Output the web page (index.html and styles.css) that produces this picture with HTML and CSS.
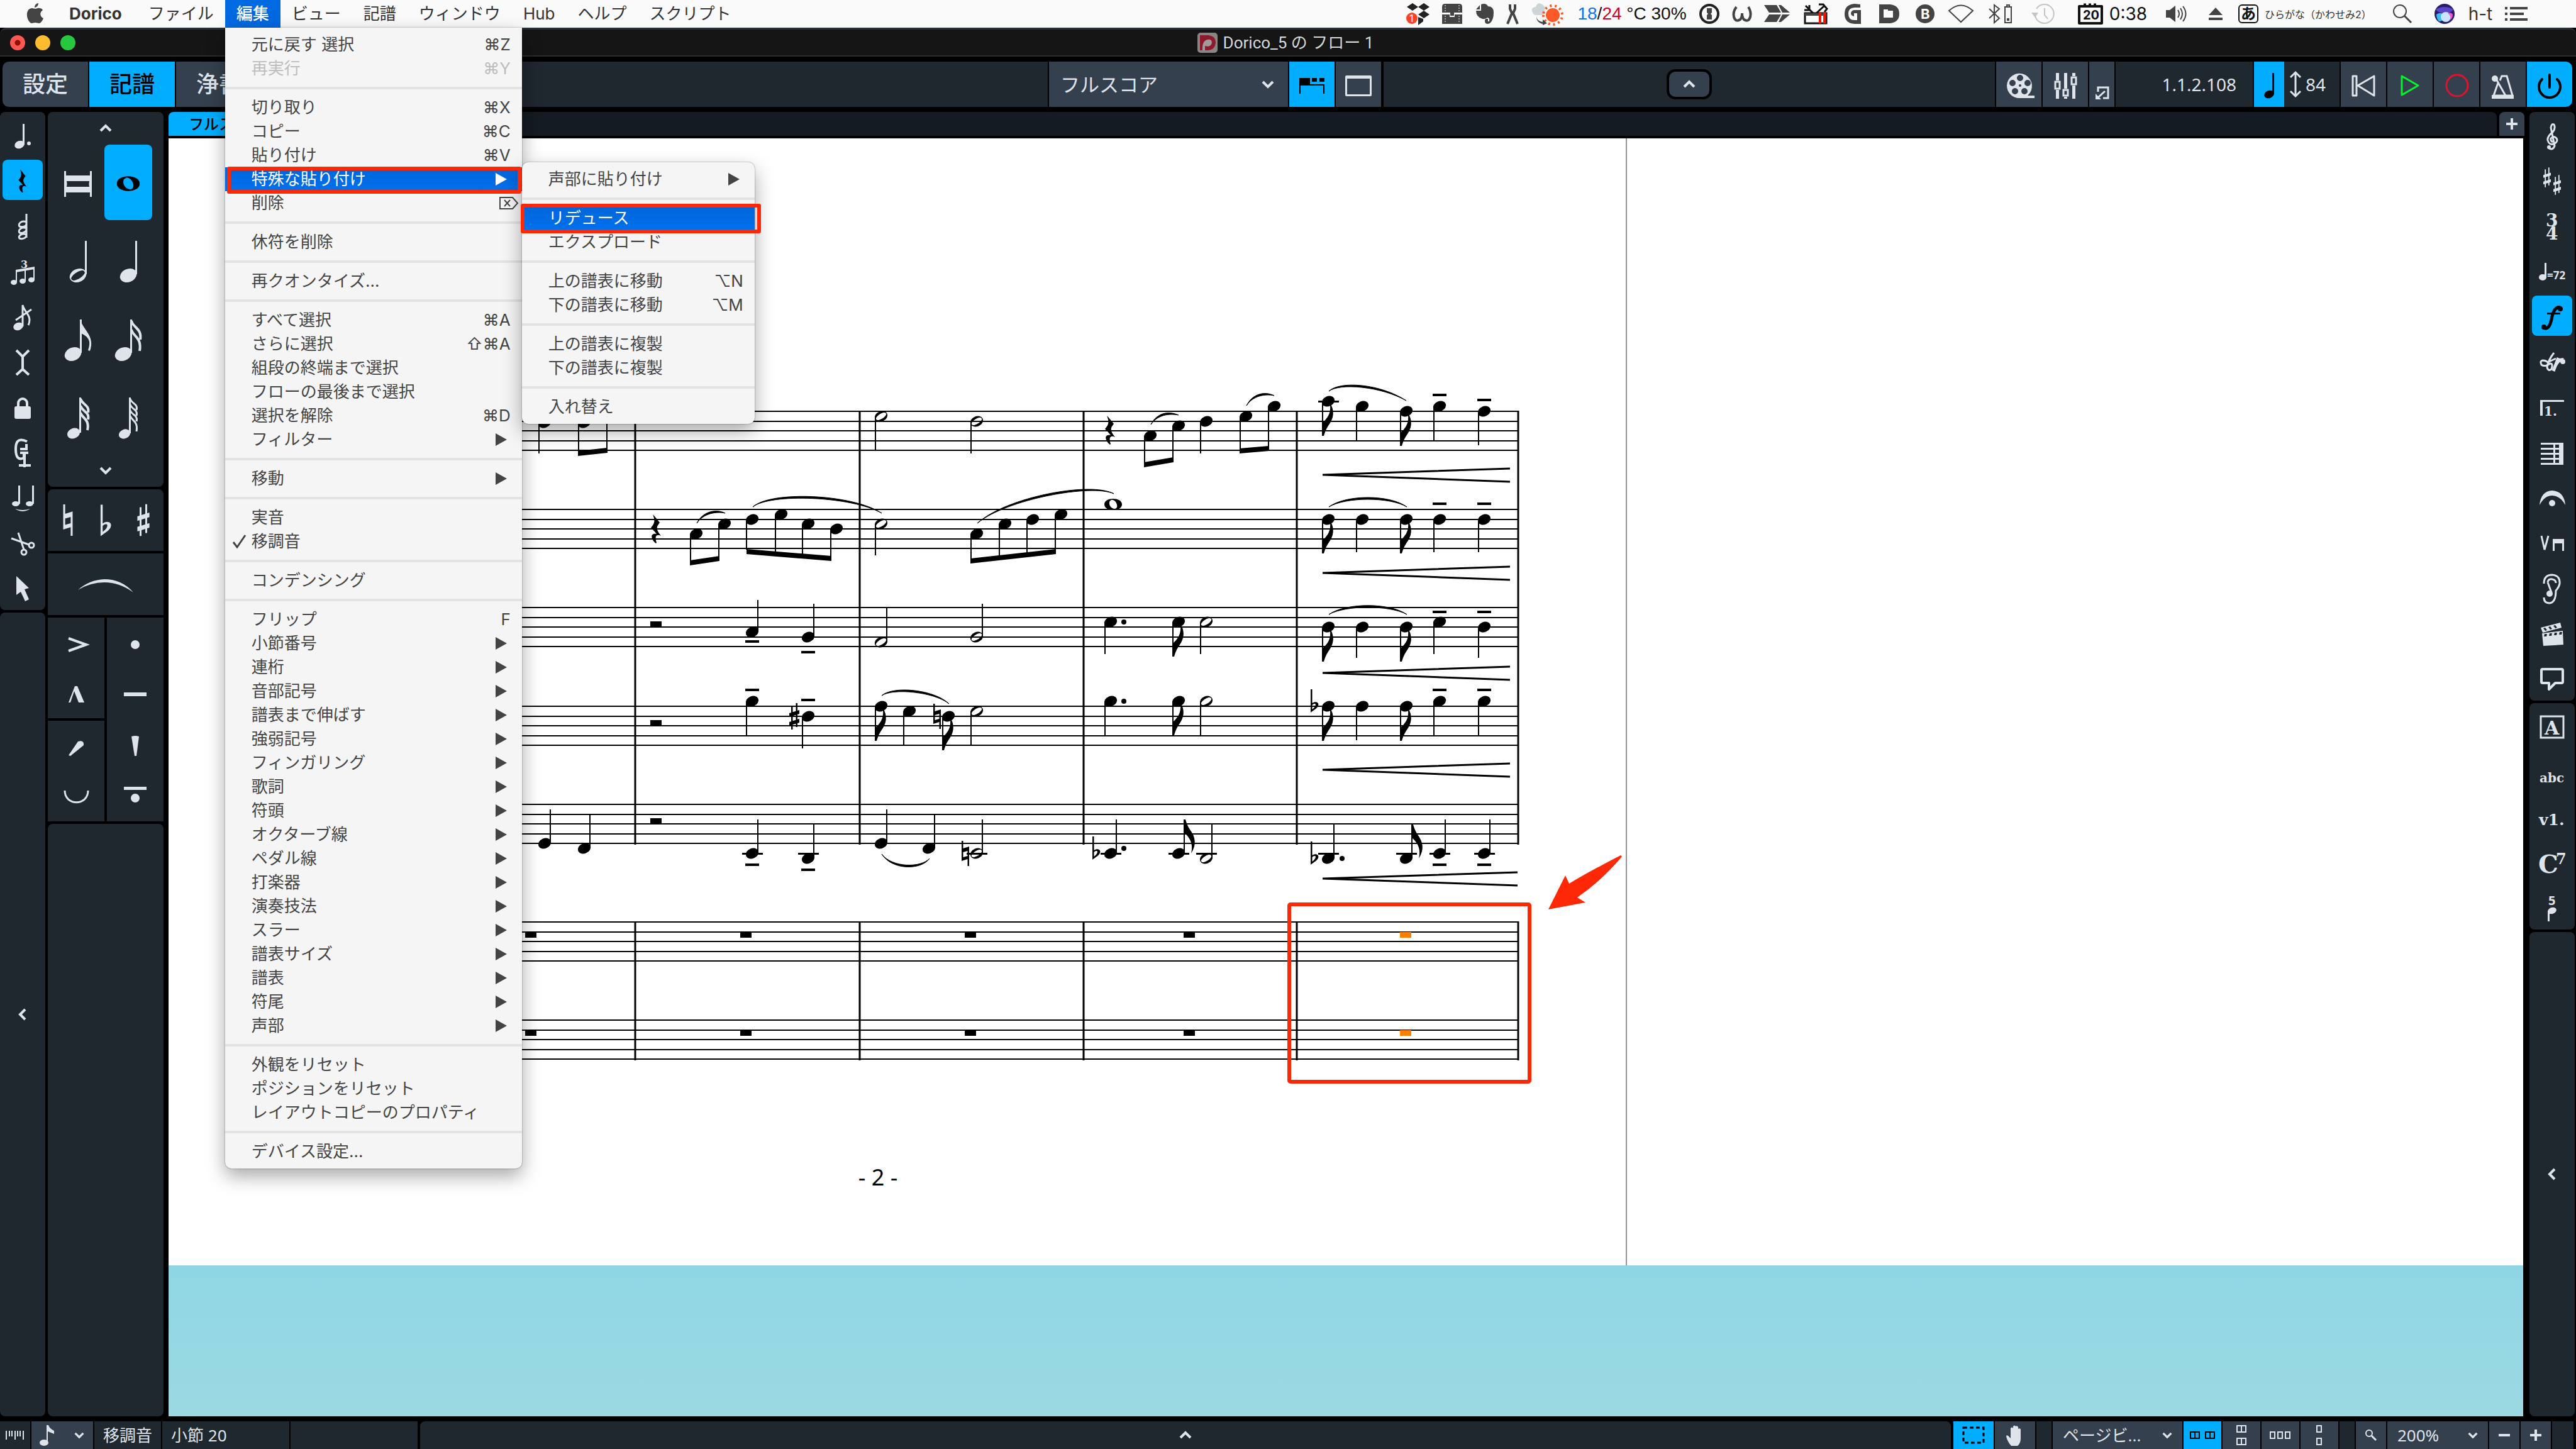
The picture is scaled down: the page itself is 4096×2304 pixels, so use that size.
FILE: index.html
```html
<!DOCTYPE html>
<html lang="ja">
<head>
  <meta charset="UTF-8">
  <meta name="viewport" content="width=device-width, initial-scale=1.0">
  <title>Dorico_5 の フロー 1</title>
  <link rel="stylesheet" href="styles.css">
</head>
<body>
  <!-- shared music shapes -->
  <svg class="defs" aria-hidden="true">
    <defs>
      <ellipse id="head" rx="10.5" ry="8" transform="rotate(-24)"/>
      <path id="half" fill-rule="evenodd" transform="rotate(-24)" d="M-10.5 0a10.5 8 0 1 0 21 0a10.5 8 0 1 0 -21 0zM-9 1.500a9.200 3.600 -8 1 1 18 -3a9.200 3.600 -8 1 1 -18 3z"/>
      <path id="whole" fill-rule="evenodd" d="M-14 0C-14 -12 14 -12 14 0C14 12 -14 12 -14 0zM-6 -3C-7 4 1 9 5 6C9 2 3 -9 -3 -7C-5 -6 -6 -5 -6 -3z"/>
      <path id="flag" d="M-1 0V-20C4 -25 16 -34 11 -54C20 -40 18 -28 9 -16C5 -10 3 -4 2 0z"/>
      <path id="rest" d="M-4 -23C-1 -20 3 -15 7 -10C1 -3 1 1 9 11C3 8 -2 10 2 22L1 23C-6 18 -10 6 2 8C-1 4 -4 1 -7 -2C-1 -9 0 -13 -4 -23z"/>
      <path id="sharp" d="M-5 -17h2.500v38h-2.500zM2.500 -21H5v38H2.500zM-8 -5L8 -10v6L-8 1zM-8 9L8 4v6L-8 15z"/>
      <path id="natural" fill-rule="evenodd" d="M-6 -20h2.500v12L6 -11V20H3.500V9L-6 12zM-3.500 -2V6L3.500 4V-4z"/>
      <path id="flat" fill-rule="evenodd" d="M-6 -27h2.500V-5C2 -9 8 -6 6 -1C5 3 -1 6 -6 10zM-3.500 -2V5C0 2 2 0 2 -3C1 -5 -2 -4 -3.500 -2z"/>
      <path id="chev" fill="none" stroke-width="4" d="M-8 4L0 -4L8 4"/>
      <path id="tri" d="M0 0L18 10L0 20z"/>
    </defs>
  </svg>

  <header class="menubar">
    <nav class="menus">
      <button class="apple" aria-label="Apple"><svg width="28" height="36" viewBox="0 0 28 36"><path d="M19 1c0 4-3 7-6 7c0-4 3-7 6-7zM14 10c2 0 4-2 7-1c2 0 4 1 5 3c-6 4-4 11 1 13c-1 3-4 8-7 8c-2 0-3-1-6-1s-4 1-6 1C4 32 0 24 1 17c1-6 5-8 8-8c2 0 4 1 5 1z"/></svg></button>
      <button class="app-name">Dorico</button>
      <button>ファイル</button>
      <div class="menu-root">
        <button class="open">編集</button>
        <div class="menu edit-menu" role="menu">
          <button>元に戻す 選択<kbd>⌘Z</kbd></button>
          <button disabled>再実行<kbd>⌘Y</kbd></button>
          <hr>
          <button>切り取り<kbd>⌘X</kbd></button>
          <button>コピー<kbd>⌘C</kbd></button>
          <button>貼り付け<kbd>⌘V</kbd></button>
          <div class="sub-root">
            <button class="active">特殊な貼り付け<svg class="tri"><use href="#tri"/></svg></button>
            <span class="mark mark-paste"></span>
            <div class="menu sub-menu" role="menu">
              <button>声部に貼り付け<svg class="tri"><use href="#tri"/></svg></button>
              <hr>
              <div class="sub-root">
                <button class="active">リデュース</button>
                <span class="mark mark-reduce"></span>
              </div>
              <button>エクスプロード</button>
              <hr>
              <button>上の譜表に移動<kbd>⌥N</kbd></button>
              <button>下の譜表に移動<kbd>⌥M</kbd></button>
              <hr>
              <button>上の譜表に複製</button>
              <button>下の譜表に複製</button>
              <hr>
              <button>入れ替え</button>
            </div>
          </div>
          <button class="wide">削除<svg width="30" height="22" viewBox="0 0 30 22"><path fill="none" stroke="#444" stroke-width="2" d="M1 2H21L29 11L21 20H1zM8 6L17 16M17 6L8 16"/></svg></button>
          <hr>
          <button>休符を削除</button>
          <hr>
          <button>再クオンタイズ...</button>
          <hr>
          <button>すべて選択<kbd>⌘A</kbd></button>
          <button>さらに選択<kbd>⇧⌘A</kbd></button>
          <button>組段の終端まで選択</button>
          <button>フローの最後まで選択</button>
          <button>選択を解除<kbd>⌘D</kbd></button>
          <button>フィルター<svg class="tri"><use href="#tri"/></svg></button>
          <hr>
          <button>移動<svg class="tri"><use href="#tri"/></svg></button>
          <hr>
          <button>実音</button>
          <button class="checked"><svg width="24" height="24" viewBox="0 0 24 24"><path fill="none" stroke="#444" stroke-width="3" d="M2 13L8 21L21 2"/></svg>移調音</button>
          <hr>
          <button>コンデンシング</button>
          <hr>
          <button>フリップ<kbd>F</kbd></button>
          <button>小節番号<svg class="tri"><use href="#tri"/></svg></button>
          <button>連桁<svg class="tri"><use href="#tri"/></svg></button>
          <button>音部記号<svg class="tri"><use href="#tri"/></svg></button>
          <button>譜表まで伸ばす<svg class="tri"><use href="#tri"/></svg></button>
          <button>強弱記号<svg class="tri"><use href="#tri"/></svg></button>
          <button>フィンガリング<svg class="tri"><use href="#tri"/></svg></button>
          <button>歌詞<svg class="tri"><use href="#tri"/></svg></button>
          <button>符頭<svg class="tri"><use href="#tri"/></svg></button>
          <button>オクターブ線<svg class="tri"><use href="#tri"/></svg></button>
          <button>ペダル線<svg class="tri"><use href="#tri"/></svg></button>
          <button>打楽器<svg class="tri"><use href="#tri"/></svg></button>
          <button>演奏技法<svg class="tri"><use href="#tri"/></svg></button>
          <button>スラー<svg class="tri"><use href="#tri"/></svg></button>
          <button>譜表サイズ<svg class="tri"><use href="#tri"/></svg></button>
          <button>譜表<svg class="tri"><use href="#tri"/></svg></button>
          <button>符尾<svg class="tri"><use href="#tri"/></svg></button>
          <button>声部<svg class="tri"><use href="#tri"/></svg></button>
          <hr>
          <button>外観をリセット</button>
          <button>ポジションをリセット</button>
          <button>レイアウトコピーのプロパティ</button>
          <hr>
          <button>デバイス設定...</button>
        </div>
      </div>
      <button>ビュー</button>
      <button>記譜</button>
      <button>ウィンドウ</button>
      <button>Hub</button>
      <button>ヘルプ</button>
      <button>スクリプト</button>
    </nav>
    <div class="tray">
      <svg width="40" height="36" viewBox="0 0 40 36"><path fill="#222" d="M11 1l9 6-9 6-9-6zM29 1l9 6-9 6-9-6zM29 13l9 6-9 6-9-6zM20 23l8 3v4l-8 6z"/><circle cx="10" cy="25" r="9" fill="#fb4126"/><text x="6" y="31" font-size="16" fill="#fff">1</text></svg>
      <svg width="34" height="34" viewBox="0 0 34 34"><path d="M1 6q0-5 5-5h22q5 0 5 5v9H1zM1 18h12v4h8v-4h12v15H1z"/><path d="M14 14h6v6h-6z"/><path fill="none" stroke="#fff" stroke-dasharray="2 2" d="M6 3v11M28 3v11M6 20v11M28 20v11"/></svg>
      <svg width="30" height="34" viewBox="0 0 30 34"><path d="M9 2q8-3 11 3q9 0 9 10q0 12-6 17q-8 3-8-4q0-4 5-3v4h2q1-6-3-6q-4 3-8 2Q1 22 1 12h8zM7 3v7H1z"/></svg>
      <svg width="22" height="34" viewBox="0 0 22 34"><path fill="none" stroke="#444" stroke-width="4" d="M7 2v7l3 7L3 33M15 2v7l-3 7l7 17"/></svg>
      <svg width="52" height="36" viewBox="0 0 52 36"><path fill="#cfd4d6" d="M2 16q-4-8 5-9q3-9 10-4q6 3 4 8q3 10-6 9H8q-5 0-6-4z"/><path fill="none" stroke="#f35b2a" stroke-width="4" stroke-dasharray="3 5" d="M19 20a15 15 0 1 0 30 0a15 15 0 1 0 -30 0"/><circle cx="34" cy="20" r="11" fill="#fb5a28"/><path d="M8 22q1 8 10 9v-4l7 6-7 3v-2q-10-2-10-12z"/></svg>
      <span class="weather"><b class="blue">18</b>/<b class="red">24</b> °C 30%</span>
      <svg width="34" height="34" viewBox="0 0 34 34"><circle cx="17" cy="17" r="14" fill="none" stroke="#222" stroke-width="4"/><path d="M13 8h8v7l-2 2l2 2v7h-8v-7l2-2l-2-2z"/></svg>
      <svg width="32" height="28" viewBox="0 0 32 28"><path fill="none" stroke="#444" stroke-width="4" d="M7 3Q1 11 3 19Q6 28 13 23Q16 20 16 13Q16 20 19 23Q26 28 29 19Q31 11 26 3"/></svg>
      <svg width="44" height="28" viewBox="0 0 44 28"><path d="M1 0h20l7 12H9zM24 0h4l14 12H30zM9 15h19l-7 12H1zM30 15h12L28 27h-4z"/></svg>
      <svg width="40" height="34" viewBox="0 0 40 34"><path fill="#fff" stroke="#111" stroke-width="3" d="M3 16h34v16H3z"/><path fill="none" stroke="#111" stroke-width="3" d="M4 4l14 14M10 3v8H2M34 4L20 17M25 2h7l6 7-4 5"/><path d="M3 16h34v4H3z"/><path fill="none" stroke="#f21800" stroke-width="4" d="M27 14v18M34 14v18"/></svg>
      <svg width="28" height="34" viewBox="0 0 28 34"><path d="M26 2v5H17q-10 0-10 10t10 10h4V16h-5v5q-5-1-5-5q1-5 6-5h10v22H17Q1 32 1 17Q1 2 17 1z"/></svg>
      <svg width="34" height="32" viewBox="0 0 34 32"><path fill-rule="evenodd" d="M1 1h18q14 2 14 15T19 31H1zM8 9v13h15V11h-8v-2z"/></svg>
      <svg width="32" height="32" viewBox="0 0 32 32"><circle cx="16" cy="16" r="15"/><text x="9" y="24" font-size="22" font-weight="bold" fill="#fff">B</text></svg>
      <svg width="42" height="30" viewBox="0 0 42 30"><path fill="none" stroke="#444" stroke-width="2" d="M2 10Q21-7 40 10L21 28z"/></svg>
      <svg width="40" height="32" viewBox="0 0 40 32"><path fill="none" stroke="#444" stroke-width="2" d="M2 8l16 15-8 7V2l8 6L2 23M27 5h10v25H27zM30 5V2h4v3"/><path d="M30 23h4v4h-4z"/></svg>
      <svg width="40" height="34" viewBox="0 0 40 34"><path fill="none" stroke="#c4c4c4" stroke-width="2" d="M7 20a15 15 0 1 0 2-11M22 8v11l5 6"/><path fill="#c4c4c4" d="M1 15h11l-5 8z"/></svg>
      <span class="clock"><svg width="40" height="34" viewBox="0 0 40 34"><path fill="none" stroke="#111" stroke-width="4" stroke-linejoin="round" d="M2 5h36v27H2z"/><path stroke="#111" stroke-width="3" stroke-dasharray="4 4" d="M9 2h24"/><text x="8" y="26" font-size="20" font-weight="bold" fill="#111">20</text></svg>0:38</span>
      <svg width="36" height="30" viewBox="0 0 36 30"><path d="M1 9h6l9-7v26l-9-7H1z"/><path fill="none" stroke="#444" stroke-width="2" d="M20 9q4 6 0 12M24 6q6 9 0 18M28 3q9 12 0 24"/></svg>
      <svg width="24" height="22" viewBox="0 0 24 22"><path d="M12 1l11 12H1zM1 17h22v4H1z"/></svg>
      <span class="ime"><i>あ</i>ひらがな（かわせみ2）</span>
      <svg width="32" height="32" viewBox="0 0 32 32"><circle cx="12" cy="12" r="10" fill="none" stroke="#444" stroke-width="2"/><path stroke="#444" stroke-width="3" d="M19 19l11 11"/></svg>
      <svg width="34" height="34" viewBox="0 0 34 34"><circle cx="17" cy="17" r="16" fill="#2b1c6b"/><path fill="#5946c8" d="M3 10q14-8 28 0q-4 6-14 6T3 10z"/><path fill="#39c0e8" d="M4 18q9-6 13 4q-4 8-9 7q-4-5-4-11z"/><circle cx="19" cy="22" r="8" fill="#c9e4ff"/><path fill="#ec5ac8" d="M22 16q6-2 8 2q0 6-4 9q2-7-4-11z"/></svg>
      <span class="user">h-t</span>
      <svg width="36" height="22" viewBox="0 0 36 22"><path d="M0 0h4v4H0zM8 0h28v4H8zM0 9h4v4H0zM8 9h22v4H8zM0 18h4v4H0zM8 18h28v4H8z"/></svg>
    </div>
  </header>

  <div class="titlebar">
    <div class="lights"><button class="close" aria-label="閉じる"></button><button class="min" aria-label="しまう"></button><button class="zoom" aria-label="拡大"></button></div>
    <h1><svg width="32" height="32" viewBox="0 0 32 32"><rect width="32" height="32" rx="5" fill="#8a8585"/><path fill="#8c1a2c" d="M4 4h13q12 1 12 12q-1 11-12 12H4z"/><path fill="#a09a9a" d="M8 28q-1-15 8-17q7-1 7 5q-2 8-11 5v7z"/></svg>Dorico_5 の フロー 1</h1>
  </div>

  <div class="toolbar">
    <div class="modes">
      <button>設定</button>
      <button class="on">記譜</button>
      <button>浄書</button>
    </div>
    <div class="fill"></div>
    <div class="group">
      <div class="select layout-select">
        <select aria-label="レイアウト"><option>フルスコア</option></select>
        <svg width="20" height="12" viewBox="-10 -6 20 12"><use href="#chev" transform="scale(1 -1)"/></svg>
      </div>
      <button class="tool on" aria-label="タブ"><svg viewBox="0 0 72 72"><path d="M16 26h17v10H16zM36 26h8v6h-8zM48 26h8v6h-8zM16 36h40v15h-2V38H18v13h-2z"/></svg></button>
      <button class="tool" aria-label="ウィンドウ"><svg viewBox="0 0 72 72"><path fill-rule="evenodd" d="M15 24q0-2 2-2h38q2 0 2 2v29q0 2-2 2H17q-2 0-2-2zM18 27v25h36V27z"/></svg></button>
    </div>
    <div class="fill toggle"><button aria-label="ツールバー"><svg width="20" height="12" viewBox="-10 -6 20 12"><use href="#chev"/></svg></button></div>
    <div class="group">
      <button class="tool" aria-label="ビデオ"><svg viewBox="0 0 72 72"><path fill-rule="evenodd" d="M17 38a20 20 0 1 1 33 16h11v4H37a20 20 0 0 1-20-20zM33 26a5 5 0 1 0 10 0a5 5 0 1 0-10 0M21 34a5 5 0 1 0 10 0a5 5 0 1 0-10 0M45 34a5 5 0 1 0 10 0a5 5 0 1 0-10 0M25 47a5 5 0 1 0 10 0a5 5 0 1 0-10 0M40 47a5 5 0 1 0 10 0a5 5 0 1 0-10 0M36 38a2 2 0 1 0 4 0a2 2 0 1 0-4 0"/></svg></button>
      <button class="tool" aria-label="ミキサー"><svg viewBox="0 0 72 72"><path fill="none" stroke="#dfe3ea" stroke-width="3" d="M20 32h7v11h-7zM33 45h7v9h-7zM46 25h7v11h-7z"/><path d="M21 18h5v12h-5zM21 45h5v14h-5zM34 18h5v25h-5zM34 56h5v3h-5zM47 18h5v5h-5zM47 38h5v21h-5z"/></svg></button>
      <button class="tool narrow" aria-label="別ウィンドウ"><svg viewBox="0 0 40 72"><path fill="none" stroke="#dfe3ea" stroke-width="3" d="M14 48V41h16v17h-8M25 47L14 57"/><path d="M10 51v9h9z"/></svg></button>
      <output class="position">1.1.2.108</output>
      <button class="tool beat on" aria-label="拍"><svg viewBox="0 0 48 72"><ellipse cx="24" cy="52" rx="8" ry="6" transform="rotate(-20 24 52)"/><path d="M29 18h3v34h-3z"/></svg></button>
      <div class="tempo"><svg width="20" height="44" viewBox="0 0 20 44"><path fill="none" stroke="#dfe3ea" stroke-width="3" d="M10 3v38M2 11l8-8l8 8M2 33l8 8l8-8"/></svg>84</div>
      <button class="tool" aria-label="先頭へ"><svg viewBox="0 0 72 72"><path fill="none" stroke="#dfe3ea" stroke-width="3" stroke-linejoin="round" d="M19 23h6v31h-6zM53 23v31L27 38z"/></svg></button>
      <button class="tool" aria-label="再生"><svg viewBox="0 0 72 72"><path fill="none" stroke="#06f22c" stroke-width="3" stroke-linejoin="round" d="M23 23v30l26-15z"/></svg></button>
      <button class="tool" aria-label="録音"><svg viewBox="0 0 72 72"><circle cx="37" cy="38" r="17" fill="none" stroke="#e0122e" stroke-width="3"/></svg></button>
      <button class="tool" aria-label="クリック"><svg viewBox="0 0 72 72"><path fill="none" stroke="#dfe3ea" stroke-width="3" d="M28 34L21 54H51L42 23H34L31 30M24 26L40 54"/><path d="M18 53h35v6H18z"/><circle cx="23" cy="27" r="5"/></svg></button>
      <button class="tool on last" aria-label="オーディオ"><svg viewBox="0 0 72 72"><path fill="none" stroke="#000" stroke-width="4" stroke-linecap="round" d="M36 21v20M24 28a17 17 0 1 0 24 0"/></svg></button>
    </div>
  </div>

  <div class="workspace">
    <aside class="left">
      <div class="strip">
        <div class="panel icons">
          <button aria-label="付点"><svg viewBox="0 0 64 64"><ellipse cx="27" cy="48" rx="8" ry="6" transform="rotate(-20 27 48)"/><path d="M32 15h3v33h-3z"/><circle cx="42" cy="46" r="3"/></svg></button>
          <button class="on" aria-label="休符"><svg viewBox="0 0 64 64"><use href="#rest" transform="translate(31 34) scale(.8)"/></svg></button>
          <button aria-label="和音"><svg viewBox="0 0 64 64"><path fill="none" stroke="#dfe3ea" stroke-width="3" d="M38 14V52M38 27C30 24 24 30 27 34C32 36 38 34 38 30M38 37C30 34 24 40 27 44C32 46 38 42 38 39M38 47C30 44 24 50 27 53C32 55 38 52 38 48"/></svg></button>
          <button aria-label="連符"><svg viewBox="0 0 64 64"><text class="slab" x="29" y="28" font-size="16">3</text><path fill="none" stroke="#dfe3ea" stroke-width="2" d="M22 51V33L50 28V47M36 49V31"/><path d="M21 31l30-5v4l-30 5z"/><ellipse cx="18" cy="51" rx="5" ry="4"/><ellipse cx="32" cy="49" rx="5" ry="4"/><ellipse cx="46" cy="47" rx="5" ry="4"/></svg></button>
          <button aria-label="装飾音符"><svg viewBox="0 0 64 64"><ellipse cx="25" cy="49" rx="8" ry="6" transform="rotate(-20 25 49)"/><path fill="none" stroke="#dfe3ea" stroke-width="3" d="M32 49V15C34 26 48 32 41 47M21 39L46 22"/></svg></button>
          <button aria-label="キャレット"><svg viewBox="0 0 64 64"><path fill="none" stroke="#dfe3ea" stroke-width="4" d="M22 15L32 25L42 15M32 24V46M22 54L32 45L42 54"/></svg></button>
          <button aria-label="ロック"><svg viewBox="0 0 64 64"><rect x="19" y="32" width="26" height="20" rx="3"/><path fill="none" stroke="#dfe3ea" stroke-width="4" d="M25 33V27a7 7 0 0 1 14 0v6"/></svg></button>
          <button aria-label="声部"><svg viewBox="0 0 64 64"><path fill="none" stroke="#dfe3ea" stroke-width="4" d="M38 20V28H28M39 16C26 10 21 15 21 28C21 42 26 46 34 42V34H28M28 34H41M35 34V57M26 54H45"/></svg></button>
          <button aria-label="タイ"><svg viewBox="0 0 64 64"><ellipse cx="21" cy="43" rx="6" ry="4"/><ellipse cx="43" cy="43" rx="6" ry="4"/><path d="M25 14h3v29h-3zM47 14h3v29h-3zM20 51Q32 55 44 51Q32 59 20 51z"/></svg></button>
          <button aria-label="はさみ"><svg viewBox="0 0 64 64"><path fill="none" stroke="#dfe3ea" stroke-width="3" d="M14 26L42 36M25 17L34 44"/><circle cx="34" cy="48" r="4" fill="none" stroke="#dfe3ea" stroke-width="3"/><circle cx="46" cy="37" r="4" fill="none" stroke="#dfe3ea" stroke-width="3"/></svg></button>
          <button aria-label="選択"><svg viewBox="0 0 64 64"><path d="M22 14L42 33L35 35L42 51L36 54L29 39L22 44z"/></svg></button>
        </div>
        <div class="panel rest"><button class="side" aria-label="左パネル"><svg width="12" height="20" viewBox="-6 -10 12 20"><use href="#chev" transform="rotate(-90)"/></svg></button></div>
      </div>
      <div class="notes">
        <div class="panel durations">
          <button class="more" aria-label="上へ"><svg width="24" height="12" viewBox="-12 -6 24 12"><use href="#chev"/></svg></button>
          <div class="cells">
            <button aria-label="倍全音符"><svg viewBox="0 0 76 120"><path d="M16 42h3v41h-3zM57 42h3v41h-3zM19 49h38v9H19zM19 67h38v9H19z"/><path d="M19 55q3 8 0 14zM57 55q-3 8 0 14z"/></svg></button>
            <button class="on" aria-label="全音符"><svg viewBox="0 0 76 120"><use href="#whole" transform="translate(38 62) scale(1.300)"/></svg></button>
            <button aria-label="2分音符"><svg viewBox="0 0 76 120"><use href="#half" transform="translate(38 84) scale(1.300)"/><path d="M49 29h3v53h-3z"/></svg></button>
            <button aria-label="4分音符"><svg viewBox="0 0 76 120"><use href="#head" transform="translate(38 84) scale(1.300)"/><path d="M49 29h3v53h-3z"/></svg></button>
            <button aria-label="8分音符"><svg viewBox="0 0 76 120"><use href="#head" transform="translate(30 85) scale(1.300)"/><path d="M41 30h3v53h-3zM42 30C45 46 66 56 57 80L54 79C61 60 50 56 43 52z"/></svg></button>
            <button aria-label="16分音符"><svg viewBox="0 0 76 120"><use href="#head" transform="translate(30 85) scale(1.300)"/><path d="M41 30h3v53h-3z"/><path fill="none" stroke="#dfe3ea" stroke-width="4" d="M43 32C45 43 60 44 57 62M43 46C45 57 60 58 56 80"/></svg></button>
            <button aria-label="32分音符"><svg viewBox="0 0 76 120"><use href="#head" x="31" y="87"/><path d="M40 30h3v56h-3z"/><path fill="none" stroke="#dfe3ea" stroke-width="4" d="M42 32C44 41 57 42 54 54M42 43C44 52 57 53 54 65M42 54C44 63 57 64 53 82"/></svg></button>
            <button aria-label="64分音符"><svg viewBox="0 0 76 120"><use href="#head" transform="translate(32 88) scale(.9)"/><path d="M39 30h3v57h-3z"/><path fill="none" stroke="#dfe3ea" stroke-width="3" d="M41 32C43 40 54 40 51 50M41 41C43 49 54 49 51 59M41 50C43 58 54 58 51 68M41 59C43 67 54 67 51 84"/></svg></button>
          </div>
          <button class="more" aria-label="下へ"><svg width="24" height="12" viewBox="-12 -6 24 12"><use href="#chev" transform="scale(1 -1)"/></svg></button>
        </div>
        <div class="panel accidentals">
          <button aria-label="ナチュラル"><svg viewBox="-30 -49 60 98"><use href="#natural" transform="scale(1.250)"/></svg></button>
          <button aria-label="フラット"><svg viewBox="-30 -49 60 98"><use href="#flat" transform="translate(0 12) scale(1.350)"/></svg></button>
          <button aria-label="シャープ"><svg viewBox="-30 -49 60 98"><use href="#sharp" transform="scale(1.200)"/></svg></button>
        </div>
        <button class="panel slur" aria-label="スラー"><svg width="184" height="98" viewBox="0 0 184 98"><path d="M48 58Q66 42 90 41Q118 41 136 62Q114 46 90 46Q68 46 48 58z"/></svg></button>
        <div class="artics">
          <div class="panel">
            <button aria-label="アクセント"><svg viewBox="0 0 90 80"><path fill="none" stroke="#dfe3ea" stroke-width="4" d="M33 33L61 43L33 53"/></svg></button>
            <button aria-label="マルカート"><svg viewBox="0 0 90 80"><path d="M33 55L43 29H47L58 55H49L42 37L36 55z"/></svg></button>
          </div>
          <div class="panel">
            <button aria-label="スタッカート"><svg viewBox="0 0 90 80"><circle cx="45" cy="43" r="7"/></svg></button>
            <button aria-label="テヌート"><svg viewBox="0 0 90 80"><path d="M27 39h36v6H27z"/></svg></button>
          </div>
          <div class="panel">
            <button aria-label="強勢"><svg viewBox="0 0 90 80"><path d="M33 55L48 33Q58 30 57 39L36 56z"/></svg></button>
            <button aria-label="非強勢"><svg viewBox="0 0 90 80"><path fill="none" stroke="#dfe3ea" stroke-width="3" d="M27 31C27 56 64 56 64 31"/></svg></button>
          </div>
          <div class="panel">
            <button aria-label="スタッカティッシモ"><svg viewBox="0 0 90 80"><path d="M39 25Q45 23 51 25L47 56H44z"/></svg></button>
            <button aria-label="テヌートスタッカート"><svg viewBox="0 0 90 80"><path d="M27 25h36v5H27z"/><circle cx="45" cy="43" r="7"/></svg></button>
          </div>
        </div>
        <div class="panel rest"></div>
      </div>
    </aside>

    <main>
      <div class="tabs">
        <button class="tab">フルスコア</button>
        <div class="tab-space"></div>
        <button class="add" aria-label="新規タブ"><svg width="18" height="18" viewBox="0 0 18 18"><path d="M7 0h4v7h7v4h-7v7H7v-7H0V7h7z"/></svg></button>
      </div>
      <div class="canvas">
        <div class="page">
          <svg id="score" width="3744" height="1792" viewBox="268 220 3744 1792"></svg>
        </div>
      </div>
    </main>

    <aside class="right">
      <div class="panel icons">
        <button aria-label="音部記号"><svg viewBox="0 0 64 64"><path fill="none" stroke="#dfe3ea" stroke-width="3" d="M26 53Q33 58 36 50L30 21Q31 14 35 16Q38 22 33 28Q24 35 25 41Q27 49 35 47Q42 43 39 38Q35 33 30 38Q29 42 33 44"/><circle cx="27" cy="52" r="3"/></svg></button>
        <button aria-label="調号"><svg viewBox="0 0 64 64"><use href="#sharp" transform="translate(24 28) scale(.75)"/><use href="#sharp" transform="translate(40 40) scale(.75)"/></svg></button>
        <button aria-label="拍子記号"><svg viewBox="0 0 64 64"><text class="slab" x="22" y="34" font-size="28">3</text><text class="slab" x="22" y="55" font-size="28">4</text></svg></button>
        <button aria-label="テンポ"><svg viewBox="0 0 64 64"><ellipse cx="17" cy="43" rx="6" ry="5"/><path d="M20 20h3v23h-3z"/><text class="digit" x="24" y="46" font-size="17">=72</text></svg></button>
        <button class="on" aria-label="強弱記号"><svg viewBox="0 0 64 64"><path fill="none" stroke="#000" stroke-width="5" d="M18 51Q27 56 31 38Q35 16 45 19"/><path d="M24 27h21v3H24z"/><circle cx="45" cy="21" r="4"/><circle cx="19" cy="50" r="4"/></svg></button>
        <button aria-label="装飾音"><svg viewBox="0 0 64 64"><path fill="none" stroke="#dfe3ea" stroke-width="3" d="M35 19Q26 30 24 42Q26 49 31 45Q34 36 29 36Q20 42 15 38Q12 32 17 31Q22 31 25 34L38 28"/><path fill="none" stroke="#dfe3ea" stroke-width="5" d="M42 27L34 48M37 40Q43 28 50 30"/><circle cx="49" cy="33" r="4"/></svg></button>
        <button aria-label="反復"><svg viewBox="0 0 64 64"><path d="M13 22h38v3H17v22h-4z"/><text class="slab" x="19" y="47" font-size="20">1.</text></svg></button>
        <button aria-label="小節"><svg viewBox="0 0 64 64"><path d="M14 18h36v3H14zM14 26h36v3H14zM14 34h36v3H14zM14 42h36v3H14zM14 50h36v3H14zM34 18h3v34h-3zM43 18h7v34h-7z"/></svg></button>
        <button aria-label="フェルマータ"><svg viewBox="0 0 64 64"><path d="M12 45Q14 23 32 22Q51 23 53 45Q45 30 32 30Q20 30 12 45z"/><circle cx="32" cy="42" r="5"/></svg></button>
        <button aria-label="演奏技法"><svg viewBox="0 0 64 64"><path fill="none" stroke="#dfe3ea" stroke-width="3" d="M15 22L20 44L26 22"/><path d="M33 27h18v19h-3V34H36v12h-3z"/></svg></button>
        <button aria-label="再生"><svg viewBox="0 0 64 64"><path fill="none" stroke="#dfe3ea" stroke-width="3" d="M19 26Q19 12 32 12Q45 13 44 26Q43 32 38 37Q38 56 28 57Q19 57 19 48M25 24Q26 18 32 19Q38 20 38 25M25 24L31 40"/><circle cx="28" cy="42" r="5"/></svg></button>
        <button aria-label="ビデオ"><svg viewBox="0 0 64 64"><path fill-rule="evenodd" d="M14 24L45 16L47 24L17 32zM18 25l3 4 3-1-3-4zM26 23l3 4 3-1-3-4zM34 21l3 4 3-1-3-4zM16 33L49 29L50 51L18 53zM20 34l-1 4h4l1-4zM28 33l-1 4h4l1-4zM36 32l-1 4h4l1-4zM44 31l-1 4h4l1-4z"/></svg></button>
        <button aria-label="コメント"><svg viewBox="0 0 64 64"><path fill="none" stroke="#dfe3ea" stroke-width="4" stroke-linejoin="round" d="M15 20q0-2 2-2h30q2 0 2 2v18q0 2-2 2H37L27 50V40H17q-2 0-2-2z"/></svg></button>
      </div>
      <div class="panel icons">
        <button aria-label="リハーサルマーク"><svg viewBox="0 0 64 64"><path fill="none" stroke="#dfe3ea" stroke-width="3" d="M14 17h36v34H14z"/><text class="slab" x="20" y="46" font-size="30">A</text></svg></button>
        <button aria-label="テキスト"><svg viewBox="0 0 64 64"><text class="slab" x="12" y="50" font-size="20">abc</text></svg></button>
        <button aria-label="歌詞"><svg viewBox="0 0 64 64"><text class="slab" x="11" y="46" font-size="25">v1.</text></svg></button>
        <button aria-label="コード記号"><svg viewBox="0 0 64 64"><text class="slab" x="10" y="50" font-size="40">C</text><text class="slab" x="38" y="36" font-size="24">7</text></svg></button>
        <button aria-label="フィンガリング"><svg viewBox="0 0 64 64"><text class="digit" x="26" y="29" font-size="20">5</text><ellipse cx="32" cy="38" rx="7" ry="5" transform="rotate(-20 32 38)"/><path d="M25 38h3v17h-3z"/></svg></button>
      </div>
      <div class="panel rest"><button class="side" aria-label="右パネル"><svg width="12" height="20" viewBox="-6 -10 12 20"><use href="#chev" transform="rotate(-90)"/></svg></button></div>
    </aside>
  </div>

  <footer class="status">
    <span class="cell keys"><svg width="30" height="14" viewBox="0 0 30 14"><path d="M0 0h2v14H0zM5 0h2v9H5zM9 0h2v9H9zM14 0h2v14h-2zM18 0h2v9h-2zM22 0h2v9h-2zM27 0h2v14h-2z"/></svg></span>
    <button class="cell key note"><svg width="26" height="34" viewBox="0 0 26 34"><ellipse cx="8" cy="29" rx="7" ry="5"/><path d="M12 1h3q2 6 9 9v5l-10-4v18h-2z"/></svg><svg width="20" height="12" viewBox="-10 -6 20 12"><use href="#chev" transform="scale(.8 -.8)"/></svg></button>
    <span class="cell pitch">移調音</span>
    <span class="cell bar">小節 20</span>
    <span class="cell bar"></span>
    <div class="cell grow"><button class="side" aria-label="下パネル"><svg width="20" height="12" viewBox="-10 -6 20 12"><use href="#chev"/></svg></button></div>
    <button class="cell key sel on" aria-label="範囲選択"><svg width="36" height="28" viewBox="0 0 36 28"><path fill="none" stroke="#000" stroke-width="3" stroke-dasharray="6 4" d="M2 2h32v24H2z"/></svg></button>
    <button class="cell key sel" aria-label="ハンド"><svg width="30" height="34" viewBox="0 0 30 34"><path d="M9 34Q2 26 1 18q2-2 5 2l2 2V6q2-3 4 0v9V3q2-3 4 0v12V3q2-2 4 1v12V7q3-2 4 1v14q0 8-5 12z"/></svg></button>
    <span class="cell gapcell"></span>
    <div class="cell key select view-select"><select aria-label="ビュー"><option>ページビ...</option></select><svg width="20" height="12" viewBox="-10 -6 20 12"><use href="#chev" transform="scale(.8 -.8)"/></svg></div>
    <button class="cell key view on" aria-label="見開き横"><svg width="40" height="12" viewBox="0 0 40 12"><path fill="none" stroke="#000" stroke-width="2" d="M1 1h7v10H1zM8 1h7v10H8zM25 1h7v10h-7zM32 1h7v10h-7z"/></svg></button>
    <button class="cell key view" aria-label="見開き縦"><svg width="18" height="32" viewBox="0 0 18 32"><path fill="none" stroke="#dfe3ea" stroke-width="2" d="M2 1h7v10H2zM9 1h7v10H9zM2 21h7v10H2zM9 21h7v10H9z"/></svg></button>
    <button class="cell key view" aria-label="単ページ横"><svg width="34" height="12" viewBox="0 0 34 12"><path fill="none" stroke="#dfe3ea" stroke-width="2" d="M1 1h7v10H1zM13 1h7v10h-7zM25 1h7v10h-7z"/></svg></button>
    <button class="cell key view" aria-label="単ページ縦"><svg width="10" height="32" viewBox="0 0 10 32"><path fill="none" stroke="#dfe3ea" stroke-width="2" d="M1 1h7v10H1zM1 21h7v10H1z"/></svg></button>
    <span class="cell gapcell"></span>
    <button class="cell key step" aria-label="検索"><svg width="20" height="20" viewBox="0 0 20 20"><circle cx="7" cy="7" r="5" fill="none" stroke="#dfe3ea" stroke-width="2"/><path stroke="#dfe3ea" stroke-width="3" d="M11 11l7 7"/></svg></button>
    <div class="cell key select zoom-select"><select aria-label="ズーム"><option>200%</option></select><svg width="20" height="12" viewBox="-10 -6 20 12"><use href="#chev" transform="scale(.8 -.8)"/></svg></div>
    <button class="cell key step" aria-label="縮小"><svg width="18" height="18" viewBox="0 0 18 18"><path d="M0 7h18v4H0z"/></svg></button>
    <button class="cell key step" aria-label="拡大"><svg width="18" height="18" viewBox="0 0 18 18"><path d="M7 0h4v7h7v4h-7v7H7v-7H0V7h7z"/></svg></button>
    <span class="cell end"></span>
  </footer>

  <script>
    const score = document.getElementById('score');
    const right = 2415;

    // [x, y, type, stem end]: q = quarter/beamed, h = half, e = eighth with flag
    const notes = [
      // staff 1
      [866, 672, 'q', 721], [929, 672, 'q', 717], [974, 665, 'q', 713],
      [1401, 662, 'h', 716], [1553, 670, 'h', 721],
      [1829, 693, 'q', 736], [1874, 677, 'q', 729], [1918, 670, 'q', 721], [1981, 662, 'q', 714], [2026, 646, 'q', 711],
      [2112, 638, 'e', 693], [2166, 646, 'q', 700], [2236, 654, 'e', 709], [2289, 646, 'q', 700], [2360, 654, 'q', 708],
      // staff 2
      [1107, 849, 'q', 892], [1152, 833, 'q', 885], [1196, 826, 'q', 874], [1242, 818, 'q', 878], [1285, 833, 'q', 883], [1330, 841, 'q', 886],
      [1401, 833, 'h', 883], [1553, 849, 'q', 890], [1598, 833, 'q', 885], [1642, 826, 'q', 880], [1687, 818, 'q', 874],
      [2112, 826, 'e', 880], [2166, 826, 'q', 878], [2236, 826, 'e', 880], [2289, 826, 'q', 878], [2360, 826, 'q', 878],
      // staff 3
      [1196, 1005, 'q', 954], [1285, 1013, 'q', 960], [1401, 1021, 'h', 966], [1553, 1013, 'h', 960],
      [1766, 989, 'q', 1040], [1874, 989, 'e', 1044], [1918, 989, 'h', 1040],
      [2112, 997, 'e', 1052], [2166, 997, 'q', 1046], [2236, 997, 'e', 1052], [2289, 989, 'q', 1040], [2360, 997, 'q', 1046],
      // staff 4
      [1196, 1115, 'q', 1169], [1285, 1139, 'q', 1190], [1401, 1123, 'e', 1178], [1446, 1131, 'q', 1185], [1508, 1139, 'e', 1193], [1553, 1131, 'h', 1185],
      [1766, 1115, 'q', 1169], [1874, 1115, 'e', 1169], [1918, 1115, 'h', 1169],
      [2112, 1123, 'e', 1178], [2166, 1123, 'q', 1177], [2236, 1123, 'e', 1178], [2289, 1115, 'q', 1169], [2360, 1115, 'q', 1169],
      // staff 5
      [866, 1341, 'q', 1287], [929, 1349, 'q', 1294], [1196, 1357, 'q', 1303], [1285, 1365, 'q', 1311],
      [1401, 1341, 'q', 1287], [1477, 1349, 'q', 1294], [1553, 1357, 'h', 1303],
      [1766, 1357, 'q', 1303], [1874, 1357, 'e', 1303], [1918, 1365, 'h', 1311],
      [2112, 1365, 'q', 1311], [2236, 1365, 'e', 1311], [2289, 1357, 'q', 1303], [2360, 1357, 'q', 1303]
    ];
    // [x1, y1, x2, y2], top edge
    const beams = [
      [919, 717, 966, 712], [1819, 735, 1866, 727], [1971, 713, 2018, 709],
      [1097, 891, 1144, 884], [1187, 873, 1322, 884], [1543, 888, 1679, 873]
    ];
    // [x1, y1, control points, x2, y2]
    const slurs = [
      [1830, 675, 1840, 656, 1858, 653, 1874, 660], [1982, 645, 1992, 625, 2012, 622, 2026, 629],
      [2113, 622, 2130, 605, 2195, 610, 2236, 637],
      [1108, 832, 1118, 812, 1140, 809, 1153, 816], [1197, 806, 1225, 780, 1355, 785, 1402, 816],
      [1554, 832, 1600, 790, 1735, 765, 1771, 785],
      [2113, 806, 2140, 786, 2210, 786, 2237, 806], [2113, 977, 2140, 958, 2210, 958, 2237, 977],
      [1402, 1106, 1420, 1090, 1485, 1096, 1509, 1119], [1402, 1358, 1418, 1380, 1465, 1380, 1478, 1365]
    ];
    const tenutos = [
      [2289, 628], [2360, 636], [2289, 801], [2360, 801], [1196, 1020], [1285, 1037], [2289, 973], [2360, 973],
      [1196, 1097], [1285, 1113], [2289, 1097], [2360, 1097], [1196, 1375], [1285, 1383], [2289, 1375], [2360, 1375]
    ];
    const ledgers = [
      [2112, 638], [1196, 1357], [1285, 1357], [1553, 1357], [1766, 1357], [1874, 1357], [1918, 1357],
      [2112, 1357], [2236, 1357], [2289, 1357], [2360, 1357]
    ];
    const dots = [[1787, 989], [1787, 1115], [1787, 1349], [2134, 1365]];
    const hairpins = [[755, 2401], [911, 2401], [1070, 2401], [1224, 2401], [1397, 2413]];
    const signs = [
      ['rest', 1764, 684], ['rest', 1042, 841], ['whole', 1770, 802],
      ['sharp', 1263, 1139], ['natural', 1490, 1139], ['natural', 1535, 1357],
      ['flat', 2090, 1123], ['flat', 1743, 1357], ['flat', 2090, 1365]
    ];

    let out = '';
    let lines = '';
    [654, 810, 966, 1123, 1279, 1466, 1622].forEach((top) => {
      for (let i = 0; i < 5; i++) {
        lines += `M600 ${Math.round(top + i * 15.6)}H${right}`;
      }
    });
    out += `<path class="line" d="${lines}"/>`;

    [1010, 1367, 1723, 2062, right - 1].forEach((x) => {
      out += `<path class="barline" d="M${x} 653V1343M${x} 1465V1686"/>`;
    });

    notes.forEach(([x, y, type, end]) => {
      const down = end > y;
      const stem = down ? x - 9 : x + 9;
      out += `<use href="#${type === 'h' ? 'half' : 'head'}" x="${x}" y="${y}"/>`;
      out += `<path class="line" d="M${stem} ${y}V${end}"/>`;
      if (type === 'e') {
        out += `<use href="#flag" transform="translate(${stem} ${end}) scale(1 ${down ? 1 : -1})"/>`;
      }
    });

    beams.forEach(([x1, y1, x2, y2]) => {
      out += `<path d="M${x1} ${y1}L${x2} ${y2}v8L${x1} ${y1 + 8}z"/>`;
    });
    slurs.forEach(([x1, y1, a, b, c, d, x2, y2]) => {
      out += `<path class="slur-line" d="M${x1} ${y1}C${a} ${b} ${c} ${d} ${x2} ${y2}C${c} ${d + 4} ${a} ${b + 4} ${x1} ${y1}z"/>`;
    });
    tenutos.forEach(([x, y]) => { out += `<rect x="${x - 11}" y="${y - 2}" width="22" height="4"/>`; });
    ledgers.forEach(([x, y]) => { out += `<rect x="${x - 16}" y="${y - 1}" width="33" height="3"/>`; });
    dots.forEach(([x, y]) => { out += `<circle cx="${x}" cy="${y}" r="4"/>`; });
    hairpins.forEach(([y, x]) => { out += `<path class="hairpin" d="M${x} ${y - 10}L2103 ${y}L${x} ${y + 11}"/>`; });
    signs.forEach(([id, x, y]) => { out += `<use href="#${id}" x="${x}" y="${y}"/>`; });

    // half rests, then whole rests of the two empty staves
    [988, 1145, 1301].forEach((y) => { out += `<rect x="1034" y="${y}" width="18" height="10"/>`; });
    [1482, 1638].forEach((y) => {
      [835, 1177, 1534, 1882].forEach((x) => { out += `<rect x="${x}" y="${y}" width="18" height="9"/>`; });
      out += `<rect class="selected" x="2226" y="${y}" width="18" height="9"/>`;
    });

    out += '<text class="page-no" x="1396" y="1885">- 2 -</text>';
    out += '<path class="page-edge" d="M2586 220V2012"/>';
    out += '<rect class="red-box" x="2050" y="1438" width="382" height="282" rx="2"/>';
    out += '<path class="red-arrow" d="M2462 1446L2489 1392L2495 1405Q2530 1384 2577 1360L2579 1362Q2545 1402 2508 1427L2521 1435z"/>';
    score.innerHTML = out;
  </script>
</body>
</html>
```
FILE: styles.css
```css
* {
  box-sizing: border-box;
}
body {
  margin: 0;
  height: 100vh;
  display: flex;
  flex-direction: column;
  overflow: hidden;
  background: #000;
  color: #dfe3ea;
  font-family: "Noto Sans", "Noto Sans CJK JP", sans-serif;
  font-size: 26px;
}
button, select {
  margin: 0;
  padding: 0;
  border: none;
  border-radius: 0;
  background: none;
  color: inherit;
  font: inherit;
  text-align: left;
}
svg {
  display: block;
  flex: none;
  fill: #dfe3ea;
  overflow: visible;
}
#chev {
  stroke: #dfe3ea;
}
.defs {
  position: absolute;
  width: 0;
  height: 0;
}

/* system menu bar */
.menubar {
  height: 44px;
  display: flex;
  justify-content: space-between;
  background: #fafafa;
  color: #333;
  font-family: Inter, "Noto Sans CJK JP", sans-serif;
}
.menubar svg {
  fill: #444;
}
.menus {
  display: flex;
  padding-left: 24px;
}
.menus > button, .menu-root > button {
  height: 44px;
  padding: 0 18px;
  line-height: 44px;
  white-space: nowrap;
}
.menus > .apple {
  padding: 0 22px 0 18px;
}
.menus > .app-name {
  padding-right: 24px;
  font-weight: bold;
}
.menu-root {
  position: relative;
}
.menu-root > .open {
  background: #0069e0;
  color: #fff;
  font-weight: 500;
}
.tray {
  display: grid;
  grid-template-columns: 54px 54px 50px 38px 74px 194px 52px 52px 60px 62px 56px 60px 54px 60px 66px 70px 150px 54px 70px 214px 96px 38px 76px 38px;
  align-items: center;
  justify-items: center;
  padding-right: 76px;
  white-space: nowrap;
}
.weather {
  font-family: "Liberation Sans", sans-serif;
  font-size: 28px;
  color: #111;
}
.weather b {
  font-weight: normal;
}
.blue {
  color: #1273ea;
}
.red {
  color: #d0022b;
}
.clock {
  display: flex;
  align-items: center;
  gap: 10px;
  font-size: 28px;
  color: #111;
}
.ime {
  display: flex;
  align-items: center;
  gap: 10px;
  font-size: 16px;
}
.ime i {
  width: 32px;
  height: 30px;
  border: 2px solid #111;
  border-radius: 6px;
  font-size: 24px;
  font-style: normal;
  font-weight: bold;
  line-height: 25px;
  text-align: center;
  color: #111;
}
.user {
  font-size: 28px;
}

/* drop-down menus */
.menu {
  position: absolute;
  padding: 8px 0;
  background: #f5f5f5;
  color: #444;
  border-radius: 0 0 10px 10px;
  box-shadow: 0 0 2px rgba(0, 0, 0, 0.5), 0 12px 30px rgba(0, 0, 0, 0.35);
}
.edit-menu {
  top: 44px;
  left: 0;
  width: 472px;
  z-index: 10;
}
.sub-menu {
  top: -8px;
  left: 472px;
  width: 370px;
  border-radius: 10px;
}
.menu button {
  width: 100%;
  height: 38px;
  padding: 0 18px 0 42px;
  display: flex;
  align-items: center;
  justify-content: space-between;
  line-height: 38px;
  white-space: nowrap;
}
.menu button:disabled {
  color: #bdbdbd;
}
.menu button.active {
  background: linear-gradient(#0066d8, #0070ee);
  color: #fff;
}
.menu button.active svg {
  fill: #fff;
}
.menu button.wide {
  padding-right: 6px;
}
.menu button.checked {
  justify-content: flex-start;
  gap: 7px;
  padding-left: 11px;
}
.menu hr {
  height: 4px;
  margin: 10px 0;
  border: none;
  background: #e3e3e3;
}
.menu kbd {
  font-family: Inter, "DejaVu Sans", sans-serif;
  font-size: 26px;
}
.tri {
  width: 18px;
  height: 20px;
  margin-right: 6px;
}
.sub-root {
  position: relative;
}
.mark {
  position: absolute;
  z-index: 2;
  border: 6px solid #fe2807;
  border-radius: 3px;
}
.mark-paste {
  inset: -1px 1px -4px 3px;
}
.mark-reduce {
  inset: -4px -10px -5px -2px;
}

/* window title */
.titlebar {
  height: 46px;
  display: grid;
  grid-template-columns: 1fr auto 1fr;
  align-items: center;
  background: #151515;
  border-top: 3px solid #2b3036;
  border-bottom: 2px solid #2c2c2c;
  border-radius: 10px 10px 0 0;
}
.lights {
  display: flex;
  gap: 16px;
  padding-left: 16px;
}
.lights button {
  width: 24px;
  height: 24px;
  border-radius: 50%;
}
.close {
  background: radial-gradient(#8c0f0b 0 4px, #fc5753 5px);
}
.min {
  background: #fdbc2e;
}
.zoom {
  background: #27c840;
}
h1 {
  display: flex;
  align-items: center;
  gap: 9px;
  margin: 0;
  padding-right: 8px;
  font-family: Roboto, "Noto Sans CJK JP", sans-serif;
  font-size: 26px;
  font-weight: normal;
  line-height: 40px;
  color: #d8d8d8;
}

/* main toolbar */
.toolbar {
  display: flex;
  gap: 2px;
  height: 72px;
  margin: 8px 6px 8px 4px;
}
.modes, .group {
  display: flex;
  gap: 2px;
}
.modes button {
  width: 136px;
  background: #34404d;
  font-size: 36px;
  font-weight: 500;
  line-height: 72px;
  text-align: center;
}
.modes button:first-child {
  border-radius: 10px 0 0 10px;
}
.modes button.on {
  background: #00adff;
  color: #000;
}
.fill {
  flex: 1248;
  background: #1f272f;
}
.fill.toggle {
  flex: 972;
  display: flex;
  align-items: center;
  margin-left: 2px;
}
.toggle button {
  width: 72px;
  height: 48px;
  margin-left: 450px;
  border: 4px solid #000;
  border-radius: 14px;
  background: #34404d;
  display: grid;
  place-items: center;
}
.select {
  display: grid;
  align-items: center;
  background: #34404d;
}
.select select, .select svg {
  grid-area: 1 / 1;
}
.select select {
  appearance: none;
  height: 100%;
  padding-left: 18px;
}
.select svg {
  justify-self: end;
  margin-right: 22px;
  pointer-events: none;
}
.layout-select {
  width: 380px;
  font-size: 31px;
}
.tool {
  width: 72px;
  background: #34404d;
}
.tool.on {
  background: #00adff;
}
.tool.on svg {
  fill: #000;
}
.tool.narrow {
  width: 40px;
}
.tool.beat {
  width: 48px;
}
.tool.last {
  border-radius: 0 10px 10px 0;
}
.position, .tempo {
  background: #1f272f;
  font-size: 28px;
  line-height: 72px;
}
.position {
  width: 218px;
  padding-right: 26px;
  text-align: right;
}
.tempo {
  width: 88px;
  margin-left: -2px;
  padding-left: 8px;
  display: flex;
  align-items: center;
  gap: 6px;
}

/* work area */
.workspace {
  flex: 1;
  min-height: 0;
  display: flex;
}
.panel {
  background: #1f272f;
  border-radius: 8px;
}
.left {
  display: flex;
  gap: 4px;
}
.strip, .notes, .right {
  display: flex;
  flex-direction: column;
  gap: 4px;
}
.strip, .right {
  width: 72px;
}
.notes {
  width: 184px;
}
.right {
  margin: 0 2px 0 10px;
}
.icons {
  display: flex;
  flex-direction: column;
  gap: 8px;
  padding: 4px;
}
.icons button {
  width: 64px;
  height: 64px;
  border-radius: 8px;
}
.icons .on, .cells .on {
  background: #00adff;
}
.icons .on svg, .cells .on svg {
  fill: #000;
}
.rest {
  flex: 1;
  display: grid;
}
.side {
  display: grid;
  place-items: center;
  width: 100%;
}
.slab {
  font-family: "DejaVu Serif", serif;
  font-weight: bold;
}
.digit {
  font-family: "Noto Sans", sans-serif;
  font-weight: bold;
}
.durations {
  display: flex;
  flex-direction: column;
}
.more {
  height: 52px;
  display: grid;
  place-items: center;
}
.cells {
  display: grid;
  grid-template-columns: 76px 76px;
  grid-auto-rows: 120px;
  gap: 4px;
  padding-left: 10px;
}
.cells button {
  border-radius: 8px;
}
.accidentals {
  height: 98px;
  display: grid;
  grid-template-columns: repeat(3, 60px);
  justify-content: center;
  border-radius: 8px 8px 0 0;
}
.slur {
  height: 98px;
  border-radius: 0;
}
.artics {
  display: grid;
  grid-template-columns: 90px 90px;
  gap: 4px;
}
.artics .panel {
  border-radius: 0;
}
.artics .panel:nth-child(2) {
  box-shadow: 0 4px #1f272f;
}
.artics button {
  display: block;
  width: 90px;
  height: 80px;
}

/* tabs and score */
main {
  flex: 1;
  min-width: 0;
  display: flex;
  flex-direction: column;
  margin-left: 8px;
}
.tabs {
  display: flex;
  height: 38px;
  margin: 0 -2px 4px 0;
}
.tab {
  width: 200px;
  padding-left: 32px;
  background: #00adff;
  color: #000;
  font-size: 24px;
  font-weight: 500;
  line-height: 38px;
  border-radius: 8px 0 0 0;
}
.tab-space {
  flex: 1;
  margin-right: 4px;
  background: #141b22;
  border-radius: 0 8px 0 0;
}
.add {
  width: 40px;
  background: #34404d;
  border-radius: 8px 8px 0 0;
  display: grid;
  place-items: center;
}
.canvas {
  flex: 1;
  overflow: hidden;
  background: linear-gradient(#8fd6e4 1792px, #9bd9e2);
}
.page {
  background: #fff;
  overflow: hidden;
}
#score {
  fill: #000;
}
#score .line {
  fill: none;
  stroke: #000;
  stroke-width: 2;
}
#score .barline {
  stroke: #000;
  stroke-width: 3;
}
#score .slur-line {
  stroke: #000;
  stroke-width: 1;
}
#score .hairpin {
  fill: none;
  stroke: #000;
  stroke-width: 3;
}
#score .selected {
  fill: #ff7f00;
}
#score .page-no {
  font-size: 36px;
  text-anchor: middle;
}
#score .page-edge {
  stroke: #949494;
  stroke-width: 2;
}
#score .red-box {
  fill: none;
  stroke: #fe2807;
  stroke-width: 6;
}
#score .red-arrow {
  fill: #fe2807;
}

/* status bar */
.status {
  display: flex;
  gap: 2px;
  height: 44px;
  margin: 8px 4px 0 0;
}
.cell {
  display: flex;
  align-items: center;
  justify-content: center;
  background: #1f272f;
  line-height: 44px;
  white-space: nowrap;
}
.key {
  background: #34404d;
}
.key.on {
  background: #00adff;
}
.keys {
  width: 48px;
}
.note {
  width: 98px;
  justify-content: space-between;
  padding: 0 12px;
}
.pitch {
  width: 106px;
}
.bar {
  width: 202px;
  justify-content: flex-start;
  padding-left: 14px;
}
.grow {
  flex: 1;
  margin: 0 2px;
  border-radius: 8px 8px 0 0;
}
.sel {
  width: 64px;
}
.gapcell {
  width: 24px;
}
.cell.select {
  display: grid;
  justify-content: stretch;
}
.cell.select select {
  padding-left: 16px;
}
.cell.select svg {
  margin-right: 14px;
}
.view-select {
  width: 206px;
}
.view {
  width: 60px;
}
.step {
  width: 48px;
}
.zoom-select {
  width: 160px;
}
.end {
  width: 34px;
}
```
